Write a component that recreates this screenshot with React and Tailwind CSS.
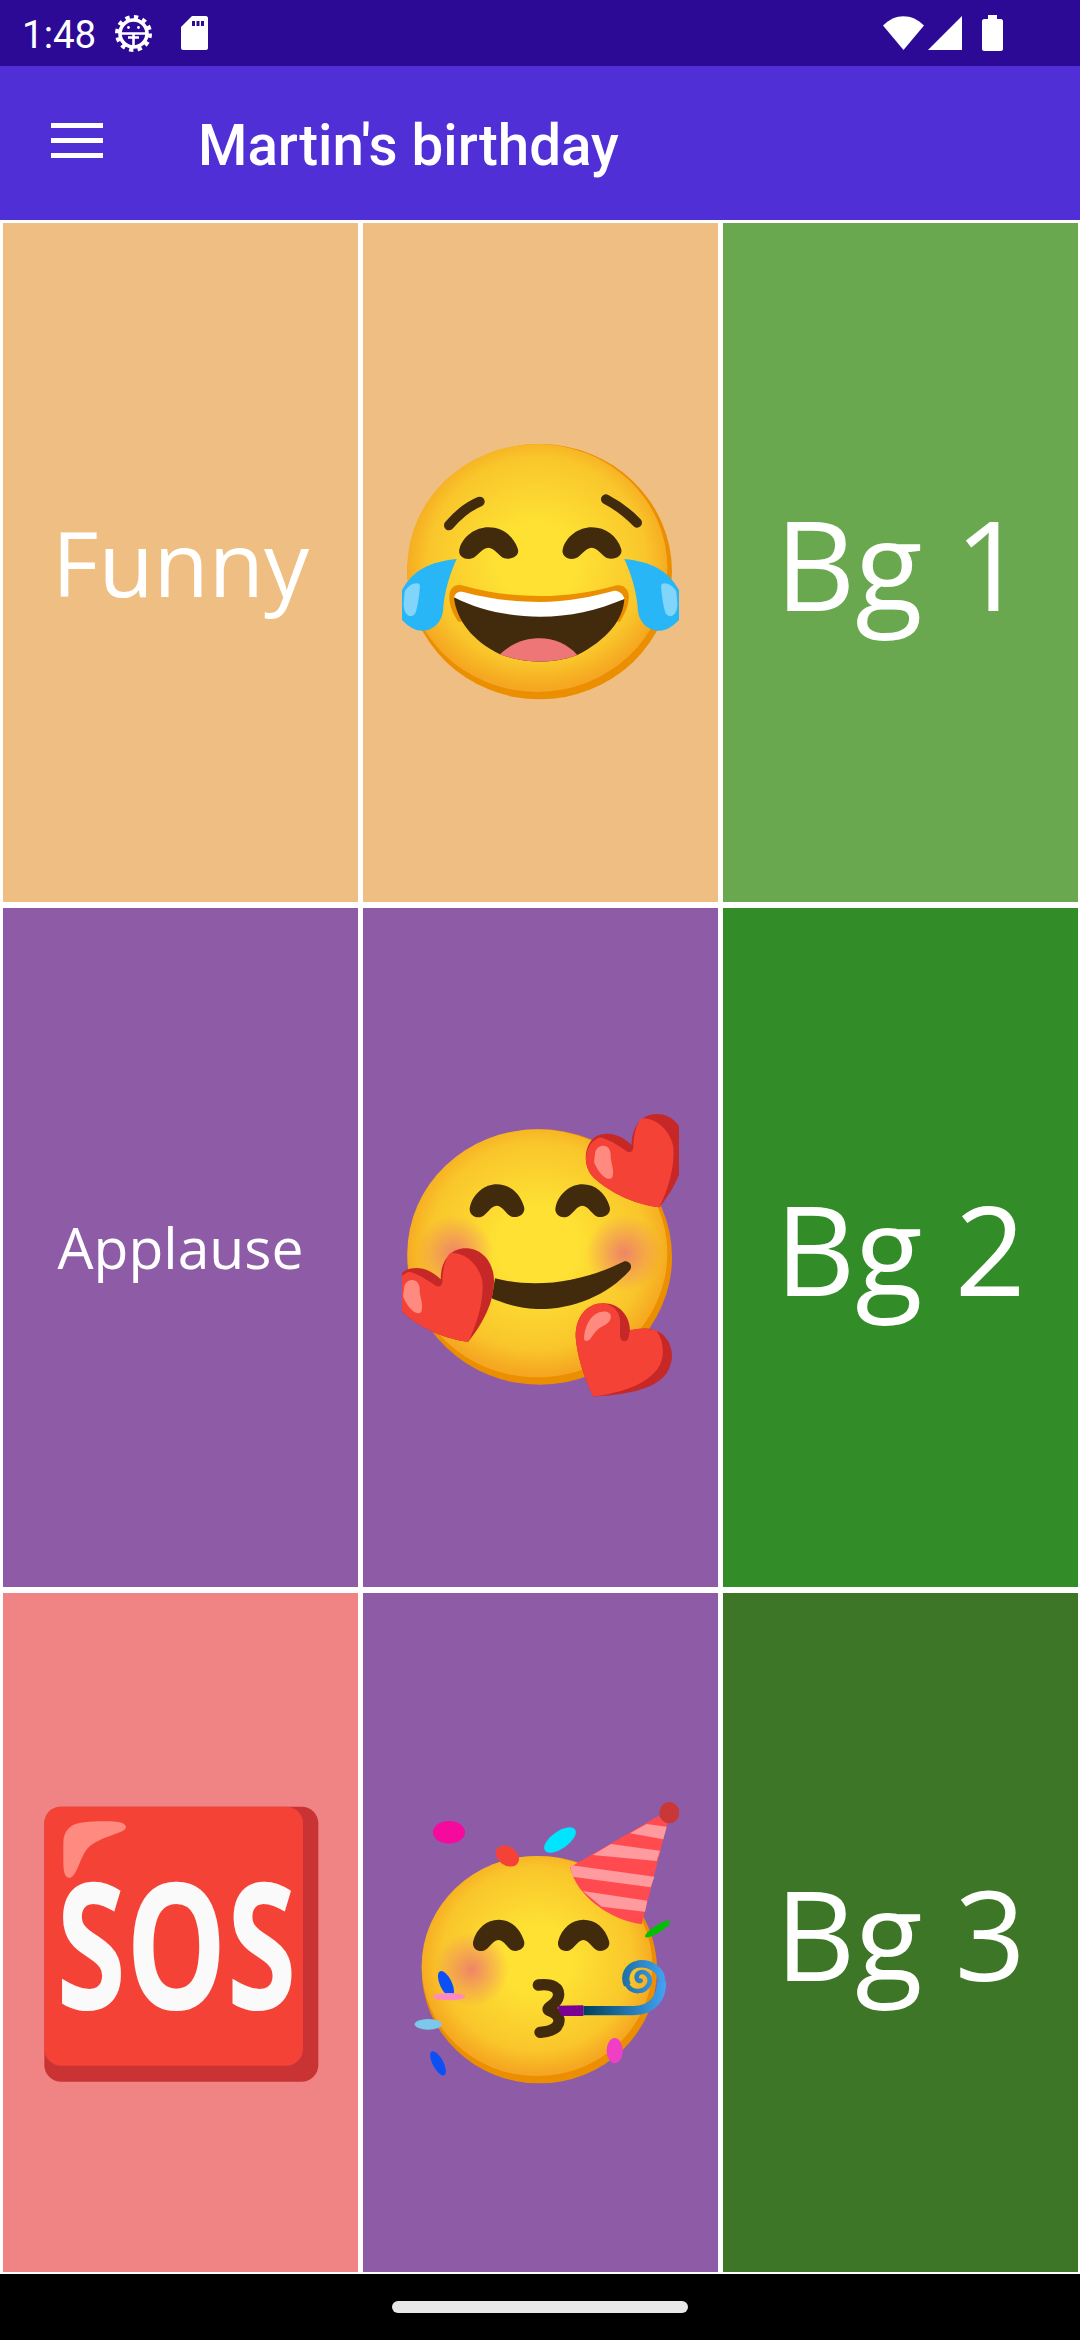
import React from "react";

const DARK = "#422B0D";

// shared eye shape, drawn around 351,333 in the crop's units
const Eye = ({ x, y, sx = 1, sy = 1 }) => (
  <path
    transform={`translate(${x} ${y}) scale(${sx} ${sy}) translate(-351 -333)`}
    d="M270 350C280 310 315 283 350 283C390 283 420 310 432 350C438 372 415 385 395 380C380 375 368 347 350 347C332 347 320 375 305 380C285 387 264 372 270 350Z"
    fill={DARK}
  />
);

const FaceGradient = ({ id }) => (
  <radialGradient id={id} cx="0.5" cy="0.47" r="0.52">
    <stop offset="0.3" stopColor="#FEE133" />
    <stop offset="0.8" stopColor="#F9C62B" />
    <stop offset="0.96" stopColor="#F6AC22" />
    <stop offset="1" stopColor="#F5A623" />
  </radialGradient>
);

const Face = ({ id, cx, cy, rx, ry }) => (
  <>
    <ellipse cx={cx} cy={cy} rx={rx} ry={ry} fill="#EB8F00" />
    <ellipse cx={cx - 7} cy={cy - 11} rx={rx - 7} ry={ry - 11} fill={`url(#${id})`} />
  </>
);

const Tear = () => (
  <>
    <path d="M230 417C150 425 100 450 66 510L66 600C90 625 110 632 125 632C165 632 190 600 190 560C195 510 210 460 230 417Z" fill="#29B6F6" />
    <path d="M74 515C85 492 115 482 120 496C118 530 112 565 106 580C92 600 70 585 71 550Z" fill="#81D4FA" />
  </>
);

const LaughEmoji = () => (
  <svg viewBox="66 0 831 900" className="w-[277px] h-[300px] mt-[15px]">
    <defs>
      <FaceGradient id="faceA" />
    </defs>
    <Face id="faceA" cx={479} cy={455} rx={397} ry={383} />
    <path d="M207 316Q250 265 299 245" stroke={DARK} strokeWidth="30" strokeLinecap="round" fill="none" />
    <path d="M678 238Q730 265 771 308" stroke={DARK} strokeWidth="30" strokeLinecap="round" fill="none" />
    <Eye x={326} y={370} sx={1.08} sy={0.96} />
    <Eye x={636} y={370} sx={1.08} sy={0.96} />
    <path d="M208 530C208 505 225 490 250 497C330 520 410 528 480 528C560 528 640 515 705 497C730 490 750 510 746 535C745 560 735 580 720 605L480 600L235 605C218 580 208 555 208 530Z" fill="#EB8F00" />
    <path d="M222 532C300 555 400 548 480 548C570 548 650 545 733 537C730 600 680 660 592 705C550 720 515 725 480 725C440 725 400 718 360 703C280 665 228 600 222 532Z" fill={DARK} />
    <path d="M222 532C225 520 235 512 250 516C330 538 410 546 480 546C560 546 640 530 700 513C715 510 730 522 733 537C650 572 570 590 480 590C390 590 300 572 222 532Z" fill="#FFFFFF" />
    <path d="M360 703C400 665 440 655 480 655C520 655 560 670 592 705C550 720 515 725 480 725C440 725 400 718 360 703Z" fill="#EF7676" />
    <Tear />
    <g transform="translate(963 0) scale(-1 1)">
      <Tear />
    </g>
  </svg>
);

const Heart = ({ dx = 0, dy = 0 }) => (
  <g transform={`translate(${dx} ${dy})`}>
    <path d="M838 352C770 345 690 310 640 262C605 225 612 160 650 138C690 120 730 140 755 165C755 110 785 72 830 72C880 72 915 115 915 170C915 235 880 300 838 352Z" fill="#C62828" />
    <path d="M838 352C770 345 690 310 640 262C605 225 612 160 660 142C695 150 725 175 742 185C755 190 762 180 760 165C762 130 770 100 785 85C835 85 870 125 880 170C885 230 865 295 838 352Z" fill="#F44336" />
    <path d="M646 185C655 160 690 160 692 192C690 215 705 240 697 262C680 280 650 240 642 215Z" fill="#FF8A80" />
  </g>
);

const HeartsEmoji = () => (
  <svg viewBox="66 0 831 960" className="w-[277px] h-[320px] mt-[5px]">
    <defs>
      <FaceGradient id="faceB" />
      <radialGradient id="blushB">
        <stop offset="0" stopColor="#ED7770" stopOpacity="0.85" />
        <stop offset="1" stopColor="#ED7770" stopOpacity="0" />
      </radialGradient>
    </defs>
    <Face id="faceB" cx={479} cy={501} rx={397} ry={383} />
    <circle cx={225} cy={490} r={115} fill="url(#blushB)" />
    <circle cx={732} cy={490} r={115} fill="url(#blushB)" />
    <Eye x={351} y={333} />
    <Eye x={608} y={333} />
    <path d="M345 565C480 600 620 570 730 515C745 510 760 525 750 540C680 620 570 660 470 657C420 655 370 640 335 625Z" fill={DARK} />
    <Heart />
    <Heart dx={-573} dy={403} />
    <path d="M640 920C610 860 590 790 587 740C587 680 620 640 670 640C720 640 750 680 750 722C790 710 830 715 850 735C880 765 885 810 860 850C820 905 720 915 640 920Z" fill="#C62828" />
    <path d="M640 920C610 860 590 790 587 740C587 680 620 640 670 640C700 645 722 665 720 700L720 740C722 755 740 760 745 745L750 720C790 712 820 718 830 722C855 760 855 810 830 840C790 890 710 910 640 920Z" fill="#F44336" />
    <path d="M612 745C615 700 640 660 680 665C700 670 695 695 675 705C650 715 640 735 630 748C622 755 612 755 612 745Z" fill="#FF8A80" />
  </svg>
);

const PartyEmoji = () => (
  <svg viewBox="36 0 831 960" className="w-[277px] h-[320px] mt-[15px]">
    <defs>
      <FaceGradient id="faceC" />
      <radialGradient id="blushC">
        <stop offset="0" stopColor="#ED7770" stopOpacity="0.85" />
        <stop offset="1" stopColor="#ED7770" stopOpacity="0" />
      </radialGradient>
      <linearGradient id="blower" gradientUnits="userSpaceOnUse" x1="580" y1="0" x2="830" y2="0">
        <stop offset="0" stopColor="#003F5C" />
        <stop offset="1" stopColor="#42A5F5" />
      </linearGradient>
    </defs>
    <Face id="faceC" cx={448} cy={569} rx={353} ry={341} />
    <circle cx={245} cy={568} r={112} fill="url(#blushC)" />
    <Eye x={326} y={467} sx={0.94} sy={0.95} />
    <Eye x={581} y={467} sx={0.94} sy={0.95} />
    <path d="M445 615C490 610 510 625 505 650C500 675 470 680 475 690C505 700 515 720 500 740C485 755 465 755 450 757" stroke={DARK} strokeWidth="34" strokeLinecap="round" strokeLinejoin="round" fill="none" />
    <path d="M540 262L805 108L832 130L755 433C660 420 560 350 540 262Z" fill="#FF4B4F" />
    <path d="M770 132L830 140L820 178L720 160Z" fill="#FF9A9E" />
    <path d="M663 192L810 212L800 243L608 225Z" fill="#FF9A9E" />
    <path d="M540 255L793 290L782 322L547 290Z" fill="#FF9A9E" />
    <path d="M578 333L772 362L765 395L635 380Z" fill="#FF9A9E" />
    <ellipse cx={838} cy={98} rx={30} ry={32} fill="#C93737" />
    <ellipse cx={177} cy={157} rx={48} ry={34} fill="#F50A9D" />
    <ellipse cx={510} cy={180} rx={55} ry={26} fill="#00E5FF" transform="rotate(-35 510 180)" />
    <ellipse cx={352} cy={228} rx={38} ry={28} fill="#F44336" transform="rotate(35 352 228)" />
    <ellipse cx={803} cy={447} rx={44} ry={11} fill="#00C000" transform="rotate(-32 803 447)" />
    <ellipse cx={168} cy={612} rx={18} ry={42} fill="#0B4FF5" transform="rotate(-25 168 612)" />
    <ellipse cx={177} cy={650} rx={48} ry={11} fill="#FF8AC0" />
    <ellipse cx={115} cy={733} rx={41} ry={16} fill="#7CC8EC" />
    <ellipse cx={144} cy={850} rx={16} ry={40} fill="#0B4FF5" transform="rotate(-28 144 850)" />
    <ellipse cx={674} cy={812} rx={24} ry={38} fill="#F03EC5" />
    <path d="M505 677L580 676L580 708L515 708L505 690Z" fill="#7B0094" />
    <path d="M580 692L730 692C790 692 815 650 815 605" stroke="url(#blower)" strokeWidth="28" fill="none" />
    <path d="M815 605C815 565 775 548 745 552C712 558 700 590 712 615" stroke="url(#blower)" strokeWidth="22" fill="none" />
    <path d="M712 615C725 640 765 640 778 610C785 585 760 568 745 580C735 590 742 605 752 602" stroke="url(#blower)" strokeWidth="14" fill="none" strokeLinecap="round" />
  </svg>
);

const SosEmoji = () => (
  <svg viewBox="0 0 960 960" className="w-[320px] h-[320px] mt-[15px]">
    <rect x="70" y="80" width="822" height="825" rx="50" fill="#C93333" />
    <rect x="70" y="80" width="776" height="777" rx="50" fill="#F44336" />
    <path d="M127 190C127 150 150 130 190 127C230 123 290 122 305 130C322 140 315 150 300 155C270 168 220 180 200 205C175 235 170 285 148 293C130 295 127 275 127 240Z" fill="#FF8A80" />
    <text
      x="106"
      y="686"
      textLength="720"
      lengthAdjust="spacingAndGlyphs"
      fontSize="530"
      fontWeight="700"
      fontFamily="'Open Sans', sans-serif"
      fill="#FAFAFA"
    >
      SOS
    </text>
  </svg>
);

const GearIcon = () => (
  <svg viewBox="0 0 37 37" className="w-[37px] h-[37px] ml-[11px]">
    <circle cx="18.5" cy="18.5" r="16.5" fill="none" stroke="#fff" strokeWidth="4" strokeDasharray="4.3 4.33" />
    <circle cx="18.5" cy="18.5" r="13.5" fill="none" stroke="#fff" strokeWidth="3.6" />
    <path d="M5 18.5H32M18.5 18.5V32M13 22.5H24" stroke="#fff" strokeWidth="2.6" fill="none" />
    <circle cx="13.5" cy="12.5" r="1.4" fill="#fff" />
    <circle cx="23.5" cy="12.5" r="1.4" fill="#fff" />
  </svg>
);

const SdIcon = () => (
  <svg viewBox="0 0 27 34" className="w-[27px] h-[34px] ml-[29px]">
    <path d="M11 0H25C26 0 27 1 27 2V32C27 33 26 34 25 34H2C1 34 0 33 0 32V11Z" fill="#fff" />
    <path d="M11 5H14V10H11ZM15.5 5H18.5V10H15.5ZM20 5H23V10H20Z" fill="#2C0A96" />
  </svg>
);

const StatusBar = () => (
  <div className="h-[66px] bg-[#2C0A96] flex items-center pl-[22px] text-white">
    <span className="w-[82px] pt-[4px] text-[38.5px] leading-[66px] font-['Roboto',sans-serif]">1:48</span>
    <GearIcon />
    <SdIcon />
    <div className="ml-auto flex items-center pr-[77px]">
      <svg viewBox="0 0 41 34" className="w-[41px] h-[34px]">
        <path d="M0 9.5C12 -3 29 -3 41 9.5L20.5 34Z" fill="#fff" />
      </svg>
      <svg viewBox="0 0 34 34" className="w-[34px] h-[34px] ml-[4px]">
        <path d="M34 0V34H0Z" fill="#fff" />
      </svg>
      <svg viewBox="0 0 21 36" className="w-[21px] h-[36px] ml-[20px]">
        <path d="M6 0H15V4H19C20 4 21 5 21 6V34C21 35 20 36 19 36H2C1 36 0 35 0 34V6C0 5 1 4 2 4H6Z" fill="#fff" />
      </svg>
    </div>
  </div>
);

const AppBar = () => (
  <div className="h-[154px] bg-[#512FD6] flex items-center text-white">
    <div className="w-[198px] pl-[51px] pb-[6px]">
      <div className="w-[52px] flex flex-col gap-[10px]">
        <div className="h-[5px] bg-white" />
        <div className="h-[5px] bg-white" />
        <div className="h-[5px] bg-white" />
      </div>
    </div>
    <h1 className="pt-[6px] text-[56.5px] font-medium font-['Roboto',sans-serif]">Martin's birthday</h1>
  </div>
);

const Cell = ({ bg, children }) => (
  <div className={`${bg} flex items-center justify-center overflow-hidden text-white font-['Open_Sans',sans-serif]`}>
    {children}
  </div>
);

export default function App() {
  return (
    <div className="w-[1080px] h-[2340px] flex flex-col bg-white">
      <StatusBar />
      <AppBar />
      <div className="grid grid-cols-[355px_355px_355px] grid-rows-[679px_679px_679px] gap-x-[5px] gap-y-[6px] pt-[3px] pb-[2px] pl-[3px]">
        <Cell bg="bg-[#EFBE83]">
          <span className="text-[90px]">Funny</span>
        </Cell>
        <Cell bg="bg-[#EFBE83]">
          <LaughEmoji />
        </Cell>
        <Cell bg="bg-[#6AA84F]">
          <span className="text-[124px]">Bg 1</span>
        </Cell>
        <Cell bg="bg-[#8E5CA7]">
          <span className="text-[57px]">Applause</span>
        </Cell>
        <Cell bg="bg-[#8E5CA7]">
          <HeartsEmoji />
        </Cell>
        <Cell bg="bg-[#328C27]">
          <span className="text-[124px]">Bg 2</span>
        </Cell>
        <Cell bg="bg-[#F08383]">
          <SosEmoji />
        </Cell>
        <Cell bg="bg-[#8E5CA7]">
          <PartyEmoji />
        </Cell>
        <Cell bg="bg-[#3D7626]">
          <span className="text-[124px]">Bg 3</span>
        </Cell>
      </div>
      <div className="flex-1 bg-black flex justify-center pt-[27px]">
        <div className="w-[296px] h-[12px] rounded-full bg-[#E8E8E8]" />
      </div>
    </div>
  );
}
